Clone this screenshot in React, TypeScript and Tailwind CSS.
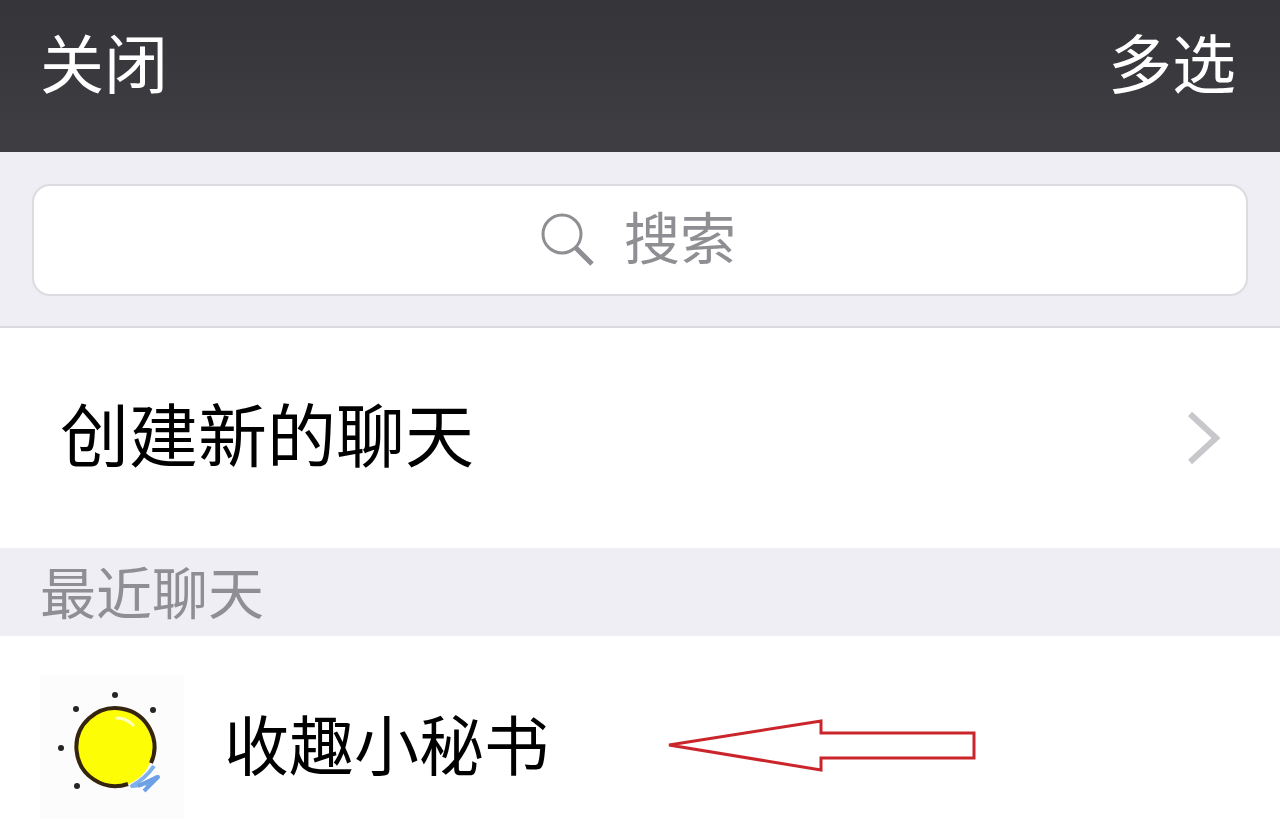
import type { ReactNode } from "react";

const RECENT_CHATS = [{ id: "shouqu", name: "收趣小秘书" }];

function SearchIcon() {
    return (
        <svg aria-hidden className="h-14 w-14 shrink-0" viewBox="0 0 56 56" fill="none" stroke="#8e8e93">
            <circle cx="22" cy="22" r="19" strokeWidth="3" />
            <path d="M35 35L52 52" strokeWidth="5" />
        </svg>
    );
}

function ChevronIcon() {
    return (
        <svg aria-hidden className="h-14 w-8 shrink-0" viewBox="0 0 32 56" fill="none" stroke="#c7c7cc" strokeWidth="6">
            <path d="M2 4L28 28L2 52" />
        </svg>
    );
}

// Yellow ball with a blue scribble at the lower right
function Avatar() {
    return (
        <svg aria-hidden className="h-36 w-36 shrink-0 bg-[#fcfcfc]" viewBox="0 0 144 144" fill="none">
            <circle cx="74" cy="74" r="39" fill="#fdfd05" />
            <path d="M111 89A39 39 0 1 0 88 110" stroke="#35250f" strokeWidth="4" />
            <path d="M77 44Q86 44 93 51" stroke="#ffffc0" strokeWidth="3" strokeLinecap="round" />
            <path
                d="M114 92Q106 104 92 112L101 111L117 103L105 111"
                stroke="#7fb0ea"
                strokeWidth="4"
                strokeLinejoin="round"
            />
            <path d="M98 112L118 103L104 117" stroke="#6ea0e6" strokeWidth="4" strokeLinejoin="round" />
            <g fill="#252525">
                <circle cx="75" cy="21" r="3" />
                <circle cx="36" cy="35" r="3" />
                <circle cx="113" cy="36" r="3" />
                <circle cx="21" cy="74" r="3" />
                <circle cx="37" cy="112" r="3" />
            </g>
        </svg>
    );
}

function ArrowMark() {
    return (
        <svg aria-hidden className="h-14 w-[312px] shrink-0" viewBox="0 0 312 56" fill="none" stroke="#cb252c" strokeWidth="3">
            <path d="M4 27L156 3V15H309V40H156V52Z" />
        </svg>
    );
}

function NavButton({ children }: { children: ReactNode }) {
    return (
        <button type="button" className="text-[64px] leading-[64px] text-white">
            {children}
        </button>
    );
}

export default function App() {
    return (
        <div className="min-h-screen bg-white pr-px font-['Noto_Sans_CJK_SC',sans-serif] font-normal">
            <header className="flex items-start justify-between bg-linear-to-b from-[#353439] to-[#3f3e43] pt-7 pr-11 pb-15 pl-10">
                <NavButton>关闭</NavButton>
                <NavButton>多选</NavButton>
            </header>

            <div className="border-b-2 border-[#d9d9de] bg-[#efeef4] px-8 pt-8 pb-[30px]">
                <label className="flex h-28 items-center justify-center gap-7 rounded-[18px] border-2 border-[#dcdce0] bg-white pr-1">
                    <SearchIcon />
                    <input
                        type="text"
                        aria-label="搜索"
                        placeholder="搜索"
                        className="field-sizing-content pb-3 text-[56px] leading-[64px] outline-none placeholder:text-[#8e8e93]"
                    />
                </label>
            </div>

            <main>
                <button type="button" className="flex h-[220px] w-full items-center justify-between pr-15 pl-15">
                    <span className="pb-3 text-[69px] leading-[72px] text-black">创建新的聊天</span>
                    <ChevronIcon />
                </button>

                <h2 className="bg-[#efeef4] px-10 pt-[10px] pb-[14px] text-[56px] leading-[64px] text-[#8e8e93]">最近聊天</h2>

                <ul>
                    {RECENT_CHATS.map((chat) => (
                        <li key={chat.id} className="flex items-center px-10 pt-[38px]">
                            <a href={`#${chat.id}`} className="flex items-center gap-10">
                                <Avatar />
                                <span className="pb-2 text-[65px] leading-[72px] text-black">{chat.name}</span>
                            </a>
                            <div className="ml-29">
                                <ArrowMark />
                            </div>
                        </li>
                    ))}
                </ul>
            </main>
        </div>
    );
}
